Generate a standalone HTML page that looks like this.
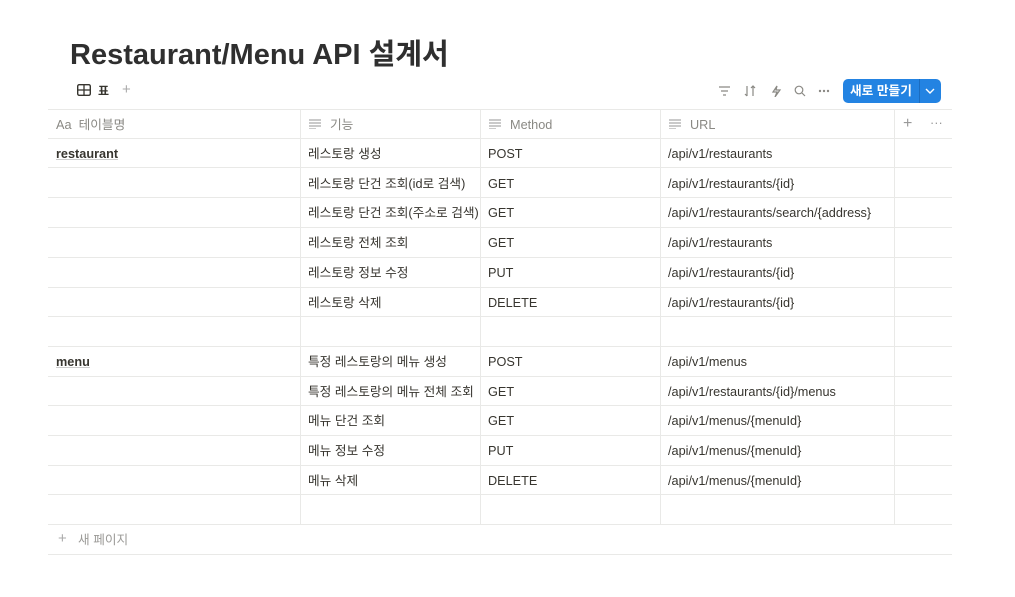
<!DOCTYPE html><html><head><meta charset="utf-8"><style>
body{margin:0;width:1015px;height:597px;background:#fff;font-family:"Liberation Sans","Noto Sans CJK KR",sans-serif;color:#37352f;position:relative;overflow:hidden}
.a{position:absolute}
h1{position:absolute;left:70px;top:31px;margin:0;font-size:29px;font-weight:700;color:#2f2f2f;letter-spacing:0px}
.hl{position:absolute;left:48px;width:904px;height:1px;background:#e9e9e7}
.vl{position:absolute;width:1px;background:#e9e9e7;top:109px;height:415px}
.c{position:absolute;font-size:12.7px;line-height:16px;white-space:nowrap}
.h{color:#8a8984;font-size:12.7px}
.ic{position:absolute}
</style></head><body>
<h1>Restaurant/Menu API 설계서</h1>
<svg class="ic" style="left:77px;top:84px" width="14" height="12" viewBox="0 0 14 12"><rect x="0.7" y="0.7" width="12.6" height="10.6" rx="1.5" fill="none" stroke="#37352f" stroke-width="1.4"/><line x1="1" y1="6" x2="13" y2="6" stroke="#37352f" stroke-width="1.3"/><line x1="7" y1="1" x2="7" y2="11" stroke="#37352f" stroke-width="1.3"/></svg>
<div class="c" style="left:98px;top:83px;font-size:12px;font-weight:700">표</div>
<div class="c" style="left:122px;top:82px;color:#aaa;font-size:15px">+</div>
<svg class="ic" style="left:718px;top:85px" width="120" height="12" viewBox="0 0 120 12" fill="none" stroke="#8a8984" stroke-width="1.2"><path d="M1 2h11M3 6h7M5 10h3"/><path d="M29 1v10M27 9l2 2M35 11V1M33 3l2-2 2 2"/><path d="M59 1l-4 6h4l-2 5 5-7h-4z"/><circle cx="81" cy="5" r="3.8"/><path d="M84 8l3 3"/><circle cx="102" cy="6" r=".6" fill="#8a8984"/><circle cx="106" cy="6" r=".6" fill="#8a8984"/><circle cx="110" cy="6" r=".6" fill="#8a8984"/></svg>
<div class="a" style="left:843px;top:79px;width:98px;height:24px;background:#2383e2;border-radius:5px"></div>
<div class="a" style="left:919px;top:79px;width:1px;height:24px;background:#1a6cc0"></div>
<div class="c" style="left:850px;top:83px;color:#fff;font-weight:700;font-size:12.7px">새로 만들기</div>
<svg class="ic" style="left:925px;top:88px" width="10" height="6"><path d="M1 1l4 4 4-4" fill="none" stroke="#fff" stroke-width="1.4"/></svg>

<div class="hl" style="top:109px"></div>
<div class="hl" style="top:138px"></div>
<div class="hl" style="top:167px"></div><div class="hl" style="top:197px"></div><div class="hl" style="top:227px"></div><div class="hl" style="top:257px"></div><div class="hl" style="top:287px"></div><div class="hl" style="top:316px"></div><div class="hl" style="top:346px"></div><div class="hl" style="top:376px"></div><div class="hl" style="top:405px"></div><div class="hl" style="top:435px"></div><div class="hl" style="top:465px"></div><div class="hl" style="top:494px"></div><div class="hl" style="top:524px"></div><div class="hl" style="top:554px"></div>
<div class="vl" style="left:300px"></div><div class="vl" style="left:480px"></div><div class="vl" style="left:660px"></div><div class="vl" style="left:894px"></div>

<div class="c h" style="left:56px;top:117px">Aa&nbsp; 테이블명</div>
<svg class="ic" style="left:309px;top:119px" width="12" height="10" stroke="#aaa" stroke-width="1.2"><path d="M0 1h12M0 4h12M0 7h12M0 10h7"/></svg>
<div class="c h" style="left:330px;top:117px">기능</div>
<svg class="ic" style="left:489px;top:119px" width="12" height="10" stroke="#aaa" stroke-width="1.2"><path d="M0 1h12M0 4h12M0 7h12M0 10h7"/></svg>
<div class="c h" style="left:510px;top:117px">Method</div>
<svg class="ic" style="left:669px;top:119px" width="12" height="10" stroke="#aaa" stroke-width="1.2"><path d="M0 1h12M0 4h12M0 7h12M0 10h7"/></svg>
<div class="c h" style="left:690px;top:117px">URL</div>
<div class="c" style="left:903px;top:116px;color:#999;font-size:16px">+</div>
<div class="c" style="left:930px;top:115px;color:#999">···</div>

<div class="c" style="left:56px;top:146px;font-weight:700;text-decoration:underline;text-decoration-color:#ccc">restaurant</div>
<div class="c" style="left:56px;top:354px;font-weight:700;text-decoration:underline;text-decoration-color:#ccc">menu</div>

<div class="c" style="left:308px;top:146px">레스토랑 생성</div><div class="c" style="left:488px;top:146px">POST</div><div class="c" style="left:668px;top:146px">/api/v1/restaurants</div>
<div class="c" style="left:308px;top:176px">레스토랑 단건 조회(id로 검색)</div><div class="c" style="left:488px;top:176px">GET</div><div class="c" style="left:668px;top:176px">/api/v1/restaurants/{id}</div>
<div class="c" style="left:308px;top:205px">레스토랑 단건 조회(주소로 검색)</div><div class="c" style="left:488px;top:205px">GET</div><div class="c" style="left:668px;top:205px">/api/v1/restaurants/search/{address}</div>
<div class="c" style="left:308px;top:235px">레스토랑 전체 조회</div><div class="c" style="left:488px;top:235px">GET</div><div class="c" style="left:668px;top:235px">/api/v1/restaurants</div>
<div class="c" style="left:308px;top:265px">레스토랑 정보 수정</div><div class="c" style="left:488px;top:265px">PUT</div><div class="c" style="left:668px;top:265px">/api/v1/restaurants/{id}</div>
<div class="c" style="left:308px;top:295px">레스토랑 삭제</div><div class="c" style="left:488px;top:295px">DELETE</div><div class="c" style="left:668px;top:295px">/api/v1/restaurants/{id}</div>
<div class="c" style="left:308px;top:354px">특정 레스토랑의 메뉴 생성</div><div class="c" style="left:488px;top:354px">POST</div><div class="c" style="left:668px;top:354px">/api/v1/menus</div>
<div class="c" style="left:308px;top:384px">특정 레스토랑의 메뉴 전체 조회</div><div class="c" style="left:488px;top:384px">GET</div><div class="c" style="left:668px;top:384px">/api/v1/restaurants/{id}/menus</div>
<div class="c" style="left:308px;top:413px">메뉴 단건 조회</div><div class="c" style="left:488px;top:413px">GET</div><div class="c" style="left:668px;top:413px">/api/v1/menus/{menuId}</div>
<div class="c" style="left:308px;top:443px">메뉴 정보 수정</div><div class="c" style="left:488px;top:443px">PUT</div><div class="c" style="left:668px;top:443px">/api/v1/menus/{menuId}</div>
<div class="c" style="left:308px;top:473px">메뉴 삭제</div><div class="c" style="left:488px;top:473px">DELETE</div><div class="c" style="left:668px;top:473px">/api/v1/menus/{menuId}</div>

<div class="c" style="left:58px;top:531px;color:#aaa;font-size:15px">+</div>
<div class="c" style="left:78px;top:532px;color:#9b9a97">새 페이지</div>
</body></html>
